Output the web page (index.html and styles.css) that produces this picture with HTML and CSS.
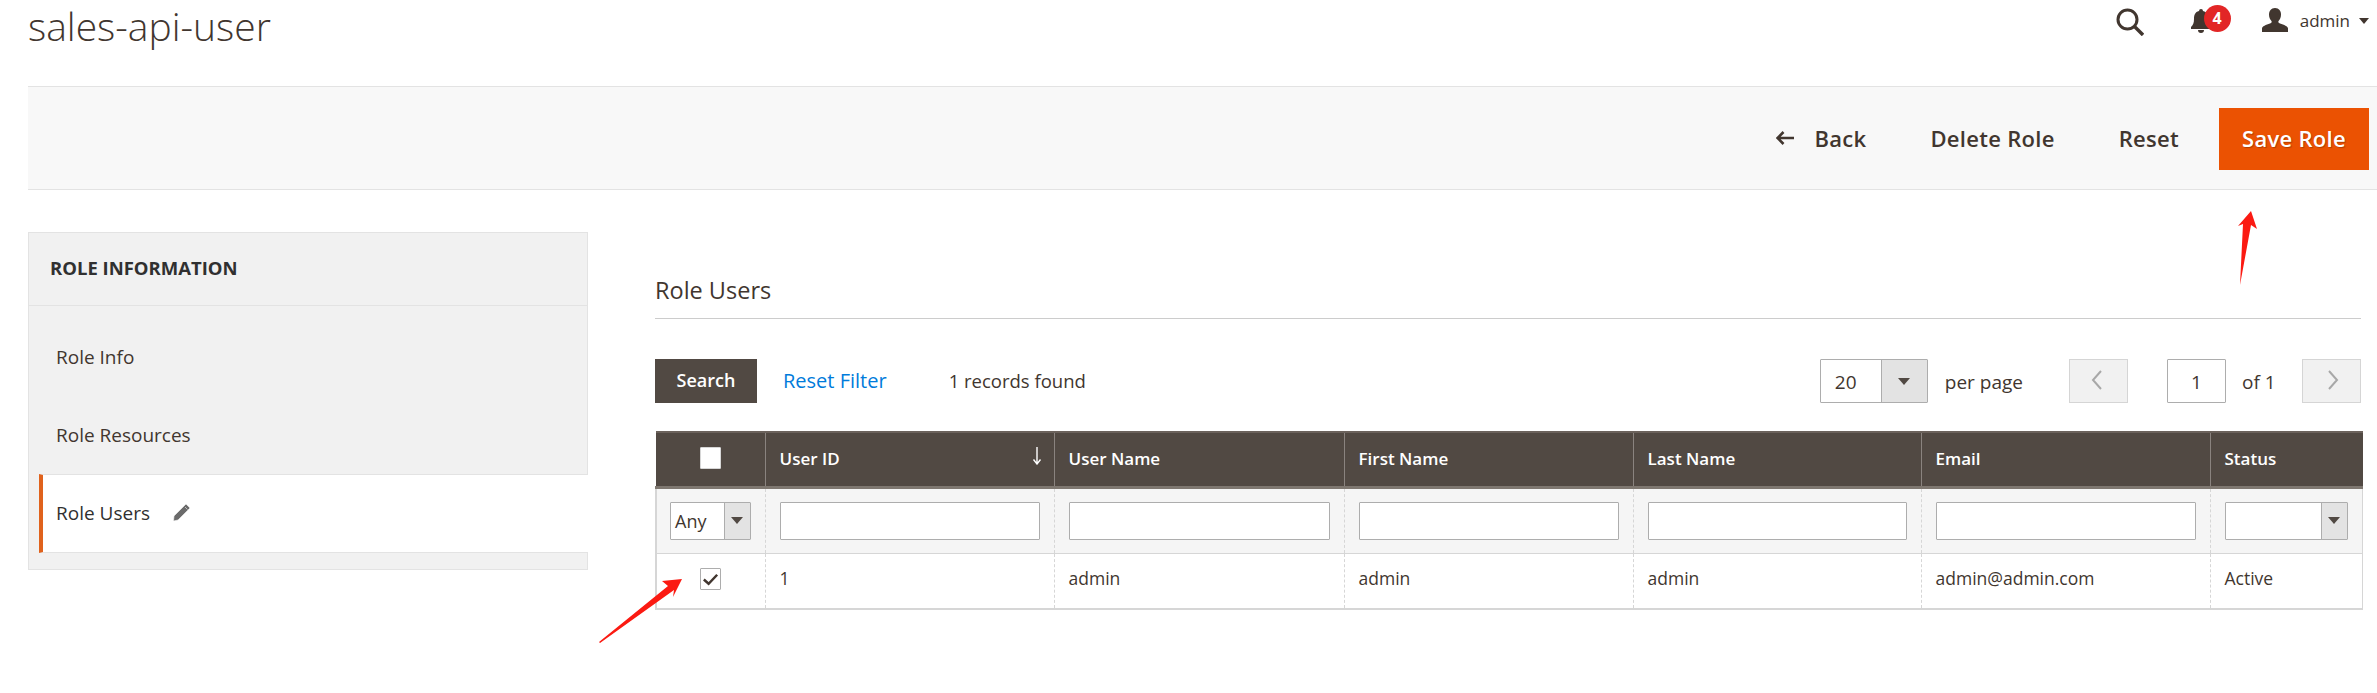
FILE: index.html
```html
<!DOCTYPE html>
<html lang="en">
<head>
<meta charset="utf-8">
<title>sales-api-user</title>
<link rel="stylesheet" href="styles.css">
</head>
<body>
<header class="top">
  <h1 class="title">sales-api-user</h1>
  <div class="tools">
    <svg class="i-search" viewBox="0 0 28 28"><circle cx="11.5" cy="11.5" r="9.5" fill="none" stroke="#41362f" stroke-width="3"/><path d="M18.5 18.5 L27 27" stroke="#41362f" stroke-width="3.4" fill="none"/></svg>
    <div class="bell">
      <svg class="i-bell" viewBox="0 0 20 24"><path d="M10 0a2 2 0 0 1 2 2c4 1 5 4 5 8 0 4 1 6 3 8v2H0v-2c2-2 3-4 3-8 0-4 1-7 5-8a2 2 0 0 1 2-2zM7 21h6a3 3 0 0 1-6 0z" fill="#41362f"/></svg>
      <span class="badge">4</span>
    </div>
    <svg class="i-user" viewBox="0 0 26 24"><path d="M13 0c4 0 6 3 6 6.500 0 3-1 5-2.500 6.500-.5 1 0 2 1.500 2.500 4 1.500 8 2.500 8 5v3.500H0V20.500c0-2.500 4-3.500 8-5 1.500-.5 2-1.500 1.500-2.500C8 11.500 7 9.500 7 6.500 7 3 9 0 13 0z" fill="#41362f"/></svg>
    <span class="admin">admin</span>
    <span class="caret"></span>
  </div>
</header>

<div class="actions">
  <button class="act back"><svg class="i-back" viewBox="0 0 18 14"><path d="M7.500 1 L1.500 7 L7.500 13 M2 7 H18" fill="none" stroke="#41362f" stroke-width="2.600"/></svg>Back</button>
  <button class="act">Delete Role</button>
  <button class="act">Reset</button>
  <button class="save">Save Role</button>
</div>

<div class="content">
  <aside class="side">
    <div class="side-title">ROLE INFORMATION</div>
    <ul class="nav">
      <li class="nav-item">Role Info</li>
      <li class="nav-item">Role Resources</li>
      <li class="nav-item active">Role Users
        <svg class="i-pencil" viewBox="0 0 19 19"><path d="M14 1 L18 5 L6 17 L1.500 18 L2 13 Z M13 4 L15.500 6.500" fill="#6b6b6b" stroke="#f8f8f8" stroke-width=".6"/></svg>
      </li>
    </ul>
  </aside>

  <main class="main">
    <h2 class="heading">Role Users</h2>
    <div class="toolbar">
      <button class="search">Search</button>
      <a class="reset-link">Reset Filter</a>
      <span class="records">1 records found</span>
      <div class="pager">
        <div class="sel sel-page"><span class="sel-val">20</span><span class="sel-arrow"><i></i></span></div>
        <span class="perpage">per page</span>
        <button class="pg prev"><svg viewBox="0 0 12 20"><path d="M10 1 L2 10 L10 19" fill="none" stroke="#a8a8a8" stroke-width="2"/></svg></button>
        <div class="pg-input">1</div>
        <span class="of">of 1</span>
        <button class="pg next"><svg viewBox="0 0 12 20"><path d="M2 1 L10 10 L2 19" fill="none" stroke="#a8a8a8" stroke-width="2"/></svg></button>
      </div>
    </div>

    <table class="grid">
      <colgroup>
        <col class="c0"><col class="c1"><col class="c2"><col class="c3"><col class="c4"><col class="c5"><col class="c6">
      </colgroup>
      <thead>
        <tr class="head">
          <th class="cb-cell"><span class="cb cb-head"></span></th>
          <th><div class="sorted">User ID<svg class="i-sort" viewBox="0 0 10 18"><path d="M5 0 V16 M1.500 12.500 L5 17 L8.500 12.500" fill="none" stroke="#fff" stroke-width="1.400"/></svg></div></th>
          <th>User Name</th>
          <th>First Name</th>
          <th>Last Name</th>
          <th>Email</th>
          <th>Status</th>
        </tr>
        <tr class="filters">
          <td><div class="sel sel-any"><span class="sel-val">Any</span><span class="sel-arrow"><i></i></span></div></td>
          <td><div class="inp"></div></td>
          <td><div class="inp"></div></td>
          <td><div class="inp"></div></td>
          <td><div class="inp"></div></td>
          <td><div class="inp"></div></td>
          <td><div class="sel sel-status"><span class="sel-val"></span><span class="sel-arrow"><i></i></span></div></td>
        </tr>
      </thead>
      <tbody>
        <tr class="row">
          <td class="cb-cell"><span class="cb"><svg viewBox="0 0 20 20"><path d="M3 10.500 L8 15 L17 5.500" fill="none" stroke="#41362f" stroke-width="2.600"/></svg></span></td>
          <td>1</td>
          <td>admin</td>
          <td>admin</td>
          <td>admin</td>
          <td>admin@admin.com</td>
          <td>Active</td>
        </tr>
      </tbody>
    </table>
  </main>
</div>

<svg class="arrows" viewBox="0 0 2377 693">
  <polygon fill="#fb1a12" points="2251,211 2257,229 2251,225 2240,285 2243,224 2238,226"/>
  <polygon fill="#fb1a12" points="682,579 662,581 668,586 599,642 600,643 674,590 673,597"/>
</svg>
</body>
</html>
```
FILE: styles.css
```css
* { box-sizing: border-box; }
html, body { margin: 0; padding: 0; }
body {
  position: relative;
  height: 693px;
  overflow: hidden;
  background: #fff;
  font-family: "Open Sans", "Liberation Sans", sans-serif;
  color: #41362f;
}
button { font-family: inherit; border: 0; background: none; padding: 0; }

.top { height: 86px; padding-left: 28px; display: flex; justify-content: space-between; align-items: flex-start; }
.title { margin: 0; font-size: 39px; font-weight: 300; line-height: 52px; color: #41362f; }
.tools { display: flex; align-items: flex-start; padding-top: 8px; padding-right: 8px; }
.i-search { width: 28px; height: 28px; }
.bell { position: relative; width: 20px; height: 24px; margin-left: 47px; margin-top: 1px; }
.i-bell { width: 20px; height: 24px; display: block; }
.badge {
  position: absolute; left: 13px; top: -4px; width: 27px; height: 27px; border-radius: 50%;
  background: #e22626; color: #fff; font-size: 16px; font-weight: 700; line-height: 27px; text-align: center;
}
.i-user { width: 26px; height: 24px; margin-left: 51px; }
.admin { margin-left: 12px; font-size: 17px; line-height: 26px; color: #41362f; }
.caret { margin-left: 9px; margin-top: 10px; width: 0; height: 0; border-left: 5.5px solid transparent; border-right: 5.5px solid transparent; border-top: 6px solid #41362f; }

.actions {
  margin-left: 28px; height: 104px; background: #f8f8f8;
  border-top: 1px solid #e3e3e3; border-bottom: 1px solid #e3e3e3;
  display: flex; align-items: flex-start; justify-content: flex-end; padding: 21px 8px 0 0;
}
.act { height: 62px; padding-bottom: 3px; margin-right: 42px; margin-left: 22px; font-size: 22px; font-weight: 600; letter-spacing: .3px; color: #41362f; display: flex; align-items: center; }
.back { margin-left: 0; }
.i-back { width: 18px; height: 14px; margin-right: 20px; }
.save { width: 150px; height: 62px; margin-left: -2px; padding-bottom: 3px; background: #eb5202; color: #fff; font-size: 22px; font-weight: 600; letter-spacing: .3px; text-shadow: 1px 1px 1px rgba(0,0,0,.25); }

.content { display: flex; align-items: flex-start; padding: 42px 16px 0 28px; }
.side { width: 560px; height: 338px; flex: none; background: #f1f1f1; border: 1px solid #e3e3e3; }
.side-title { height: 73px; border-bottom: 1px solid #e3e3e3; padding: 0 21px; font-size: 18.5px; font-weight: 700; line-height: 69px; color: #303030; }
.nav { list-style: none; margin: 0; padding: 12px 0 0; }
.nav-item { height: 78px; padding-left: 17px; margin-left: 10px; font-size: 19px; line-height: 78px; color: #41362f; }
.nav-item.active {
  display: flex; align-items: center; gap: 22px; background: #fff; color: #303030; height: 79px;
  margin-right: -1px; padding-left: 13px; padding-bottom: 2px; border-left: 4px solid #e0621c;
  border-top: 1px solid #e3e3e3; border-bottom: 1px solid #e3e3e3; font-weight: 500;
}
.i-pencil { width: 19px; height: 19px; }

.main { flex: 1; margin-left: 67px; min-width: 0; }
.heading { margin: 0; padding-top: 40px; height: 87px; font-size: 23.5px; font-weight: 500; line-height: 36px; border-bottom: 1px solid #cccccc; color: #41362f; }
.toolbar { display: flex; align-items: center; height: 44px; margin-top: 40px; }
.search { width: 102px; height: 44px; padding-bottom: 2px; background: #514943; color: #fff; font-size: 18px; font-weight: 600; }
.reset-link { margin-left: 26px; margin-top: -2px; color: #007bdb; font-size: 20px; font-weight: 500; }
.records { margin-left: 62px; margin-top: -1px; font-size: 18.5px; color: #41362f; }
.pager { margin-left: auto; display: flex; align-items: center; height: 44px; }

.sel { display: flex; background: #fff; border: 1px solid #adadad; border-radius: 1px; }
.sel-val { flex: 1; font-size: 19px; color: #41362f; padding-left: 14px; }
.sel-arrow { background: #e3e3e3; border-left: 1px solid #adadad; display: flex; align-items: center; justify-content: center; }
.sel-arrow i { width: 0; height: 0; border-left: 6px solid transparent; border-right: 6px solid transparent; border-top: 7px solid #514943; }
.sel-page { width: 108px; height: 44px; line-height: 44px; }
.sel-page .sel-arrow { width: 46px; }
.perpage { margin-left: 17px; margin-top: 2px; font-size: 19px; margin-right: 46px; white-space: nowrap; }
.pg { width: 59px; height: 44px; background: #f1f1f1; border: 1px solid #d5d5d5; display: flex; align-items: flex-start; justify-content: center; padding-top: 10px; }
.prev { padding-right: 4px; }
.next { padding-left: 2px; }
.pg svg { width: 12px; height: 20px; }
.pg-input { width: 59px; height: 44px; margin-left: 39px; border: 1px solid #adadad; border-radius: 1px; text-align: center; font-size: 19px; line-height: 44px; }
.of { margin-left: 16px; margin-top: 2px; margin-right: 29px; font-size: 19px; width: 31px; white-space: nowrap; }

.grid { width: 100%; table-layout: fixed; border-collapse: collapse; margin-top: 28px; font-size: 17.5px; }
.c0 { width: 109px; } .c1 { width: 289px; } .c2 { width: 290px; } .c3 { width: 289px; }
.c4 { width: 288px; } .c5 { width: 289px; } .c6 { width: 152px; }
.head th {
  height: 55px; padding: 0 14px 2px; background: #514943; color: #fff; font-size: 17px; font-weight: 600; text-align: left;
  border: 1px solid #8a837f; border-top: 2px solid #6b625c; border-bottom: 3px solid #7e7770;
}
.head th:first-child { border-left-color: #514943; }
.head th:last-child { border-right-color: #514943; }
.head th.cb-cell { text-align: center; padding: 0 0 5px; }
.sorted { display: flex; justify-content: space-between; align-items: center; }
.i-sort { width: 10px; height: 18px; margin-top: -5px; margin-right: -2px; }
.filters td { height: 66px; padding: 0 14px; background: #f5f5f5; border-left: 1px dashed #d6d6d6; border-right: 1px dashed #d6d6d6; border-bottom: 1px solid #d6d6d6; }
.filters td:first-child { border-left: 2px solid #d6d6d6; padding-left: 13px; }
.filters td:last-child { border-right: 1px solid #d6d6d6; }
.inp { height: 38px; background: #fff; border: 1px solid #adadad; border-radius: 1px; }
.sel-any, .sel-status { height: 38px; line-height: 36px; }
.sel-any .sel-val { padding-left: 4px; font-size: 18px; }
.sel-any .sel-arrow { width: 26px; }
.sel-status .sel-arrow { width: 26px; }
.row td { height: 56px; padding: 0 14px 5px; font-size: 17.5px; color: #41362f; border-left: 1px dashed #d6d6d6; border-right: 1px dashed #d6d6d6; border-bottom: 2px solid #d6d6d6; }
.row td:first-child { border-left: 2px solid #d6d6d6; }
.row td:last-child { border-right: 1px solid #d6d6d6; }
.cb-cell { text-align: center; }
.row td.cb-cell { padding: 0 0 7px; }
.cb { display: inline-block; width: 21px; height: 22px; background: #fff; border: 1px solid #adadad; border-radius: 1px; vertical-align: middle; }
.cb svg { display: block; width: 19px; height: 20px; }
.cb-head { border-color: #d6d6d6; }

.arrows { position: absolute; left: 0; top: 0; width: 2377px; height: 693px; pointer-events: none; }
```
